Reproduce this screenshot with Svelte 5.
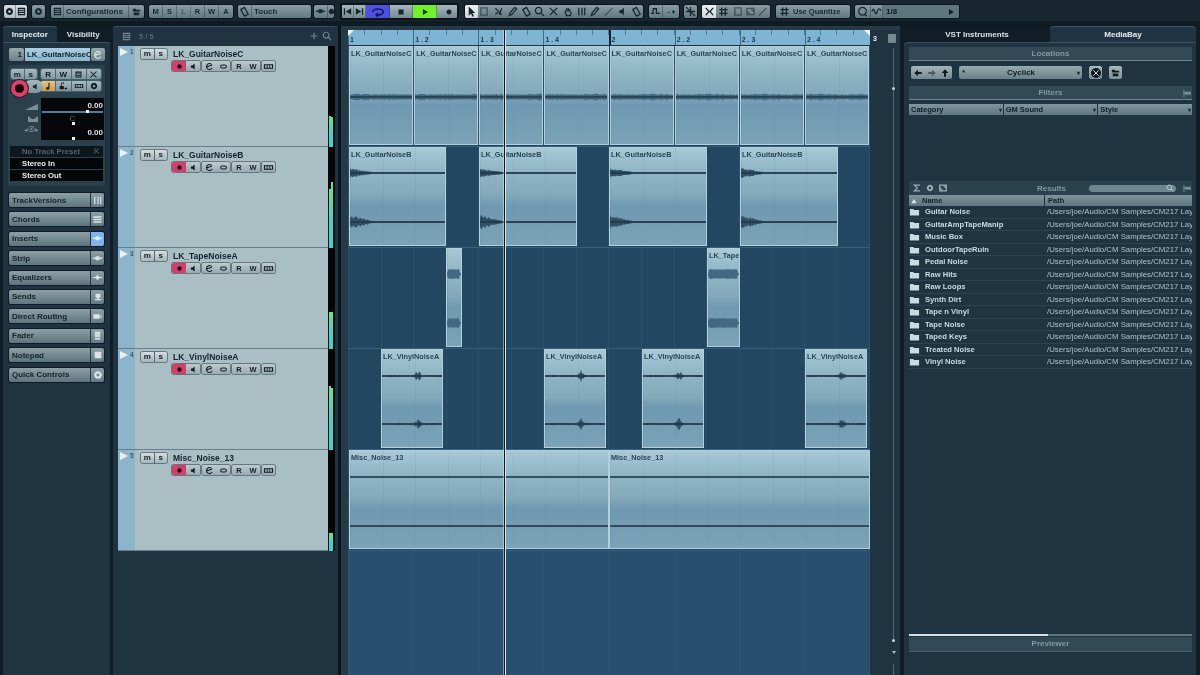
<script>
  const BEAT = 65.125
  const NAMES = ['LK_GuitarNoiseC', 'LK_GuitarNoiseB', 'LK_TapeNoiseA', 'LK_VinylNoiseA', 'Misc_Noise_13']
  const METERS = [[31, 30], [59, 66], [37, 37], [64, 62], [18, 18]]

  const rnd = (i) => { const s = Math.sin(i * 91.17 + 3.3) * 43758.5; return s - Math.floor(s) }

  // amplitude per kind, x in px from start of the event
  const amp = {
    noise: (x, w, s) => 1.8 + rnd(x + s) * 1.6,
    decay: (x, w, s) => 0.7 + (x < 24 ? (24 - x) / 24 * (s % 200 > 90 ? 6 : 4) * (0.5 + rnd(x + s) * 0.7) : 0),
    block: (x, w, s) => (x < 1 || x > w - 2 ? 1 : 4.2 + rnd(x + s) * 0.8),
    burst: (x, w, s) => {
      const d = Math.abs(x - w * 0.6)
      return 0.4 + (d < 5 ? (5 - d) * 1.1 * (0.2 + rnd(x + s)) : rnd(x + s) * 0.8)
    },
    line: () => 0.5
  }

  function wave(kind, w, c, seed) {
    let top = '', bot = ''
    for (let x = 0; x <= w; x++) {
      const a = amp[kind](x, w, seed).toFixed(1)
      top += `${x ? 'L' : 'M'}${x} ${(c - a).toFixed(1)}`
      bot = `L${x} ${(c + +a).toFixed(1)}` + bot
    }
    return top + bot + 'Z'
  }

  const ev = (x0, x1, kind, cs, label = true) => ({ x: x0, w: x1 - x0, kind, cs, label })
  const lanes = [
    { name: NAMES[0], events: [0, 1, 2, 3, 4, 5, 6, 7].map((i) => ev(349 + i * BEAT, 349 + (i + 1) * BEAT - 1, 'noise', [50])) },
    { name: NAMES[1], events: [[349, 446], [479, 577], [609, 707], [740, 838]].map(([a, b]) => ev(a, b, 'decay', [25, 74])) },
    { name: NAMES[2], events: [ev(446, 462, 'block', [25, 74], false), ev(707, 740, 'block', [25, 74])], short: 'LK_Tape' },
    { name: NAMES[3], events: [[381, 443], [544, 606], [642, 704], [805, 867]].map(([a, b]) => ev(a, b, 'burst', [26, 74])) },
    { name: NAMES[4], events: [ev(349, 609, 'line', [26, 75]), ev(609, 870, 'line', [26, 75])] }
  ]

  const rulerLabels = ['1', '1 . 2', '1 . 3', '1 . 4', '2', '2 . 2', '2 . 3', '2 . 4']

  const inspectorBtns = [
    ['TrackVersions', 'versions'], ['Chords', 'bars'], ['Inserts', 'insert', true], ['Strip', 'insert'],
    ['Equalizers', 'eq'], ['Sends', 'send'], ['Direct Routing', 'route'], ['Fader', 'fader'],
    ['Notepad', 'note'], ['Quick Controls', 'knob']
  ]

  const folders = ['Guitar Noise', 'GuitarAmpTapeManip', 'Music Box', 'OutdoorTapeRuin', 'Pedal Noise', 'Raw Hits', 'Raw Loops',
    'Synth Dirt', 'Tape n Vinyl', 'Tape Noise', 'Taped Keys', 'Treated Noise', 'Vinyl Noise']

  const paths = {
    rec: 'M6 3a3 3 0 1 0 .01 0z',
    spk: 'M2.5 4.5h2l3-2.5v8l-3-2.5h-2z',
    play: 'M3.5 2.5l6 3.5-6 3.5z',
    stop: 'M3 3h6v6H3z',
    first: 'M2 2.5h1.4v7H2zM10 2.5v7L4 6z',
    last: 'M10 2.5H8.6v7H10zM2 2.5v7L8 6z',
    cur: 'M3 .5v10l2.4-2.2 1.6 3.4 1.6-.7-1.6-3.3H10z',
    up: 'M6 1.5L10 6H7.2v4.5H4.8V6H2z',
    left: 'M1.5 6L6 2v2.8h4.5v2.4H6V10z',
    right: 'M10.5 6L6 2v2.8H1.5v2.4H6V10z',
    tri: 'M2 9.5L6 3l4 6.5z',
    note: 'M6.5 2h1.3v6.8a2 1.6 0 1 1-1.3-1.4z',
    lock: 'M2 6h5v4H2zM3.5 6V3.5a2 2 0 0 1 4 0H6.4a1 1 0 0 0-2 0V6zM8 8h3v2H8z',
    folder: 'M1 3.2h3.6l1 1.2H11v6H1z',
    fold2: 'M2 3h3l1 1h4v2H2zM3 7h6v3H3z',
    ins: 'M1 5h3V3.5h4V5h3v1.5H8V8H4V6.5H1z',
    bars: 'M1.5 2.5h9v1.6h-9zM1.5 5.2h9v1.6h-9zM1.5 8h9v1.6h-9z',
    eqd: 'M1 5.5h2.8L6 3l2.2 2.5H11v1H8.2L6 9 3.8 6.5H1z',
    send: 'M3 2h6v5H7v1.5h3V10H2V8.5h3V7H3z',
    route: 'M1.5 3.5h7v5h-7zM9.2 5h1.5v2H9.2z',
    fdr: 'M3 1.5h6v6H3zM3 8.5h6v2H3z',
    notes: 'M2 2h8v8H2z',
    gear: 'M6 2.2a3.8 3.8 0 1 0 .01 0zM6 4.5a1.5 1.5 0 1 1-.01 0z',
    mon: 'M1 3.5h10v5H1zM2.2 4.6v2.8h1.9V4.6zM5 4.6v2.8h2V4.6zM7.9 4.6v2.8h1.9V4.6z',
    list: 'M2 2h8v8H2zM3 3.6h6v1H3zM3 5.6h6v1H3zM3 7.6h6v1H3z'
  }
  const lines = {
    cycle: 'M1.5 6a4.5 2.6 0 0 1 9 0 4.5 2.6 0 0 1-6 2.4M6 7l-1.6 1.4L6 10',
    mag: 'M5 1.5a3.5 3.5 0 1 0 .01 0M7.6 7.6L11 11',
    plus: 'M6 2v8M2 6h8',
    edit: 'M9.2 3.6A4 4 0 1 0 9.5 8M2.6 6.2L9 4.4',
    link: 'M4.2 4a2 2 0 0 0 0 4h3.6a2 2 0 0 0 0-4z',
    pencil: 'M2.5 10.5l1-3 5-6 2 1.6-5 6z',
    line: 'M2 10.5L10.5 2',
    x: 'M2 2l8 8M10 2l-8 8',
    sel: 'M2 2h7v8H2z',
    bar3: 'M3 2v8M6.5 2v8M9.5 2v8',
    hand: 'M3.5 7V5M5 6V2.5M6.8 6V2.2M8.5 6.5V3.2M3.5 7L5 10.5h4l1-4',
    glue: 'M2 4l4-2.5 4 7.5-4 2z',
    splice: 'M2.5 2.5l7 7M9.5 2.5l-2.5 7M2.5 9l3-2',
    snap: 'M1 8h2.5V3H7v5h4',
    xtra: 'M2 2l3.5 4L2 10M10 2L6.5 6 10 10',
    grid: 'M4 1.5v9M8 1.5v9M1.5 4h9M1.5 8h9',
    q: 'M6 1.5a4.2 4.2 0 1 0 .01 0M8 8.5l2.5 2.5',
    sq: 'M1 6q1.5-5 3 0t3 0 4-1',
    diag: 'M1 1l10 10M6 1v10M1 6h10',
    rew: 'M3 2v8M9 2.5L4.5 6 9 9.5',
    sum: 'M9.5 2.5H2.8L6.4 6 2.8 9.5h6.7',
    sync: 'M2 7V2.5h8V6M10 5v4.5H2V7M7 3.5l3 3M5 8.5L2 5.5'
  }

  const mainTop = [
    { m: 4, w: 23, light: true, cells: [['gear'], ['list']] },
    { m: 5, w: 13, cells: [['gear']] },
    { m: 6, w: 93, cells: [['list', '', 13], ['', 'Configurations', 65, false, true], ['fold2', '', 15]] },
    { m: 5, w: 84, cells: ['M', 'S', 'L', 'R', 'W', 'A'].map((t) => ['', t, 14, t === 'L']) },
    { m: 5, w: 73, cells: [['glue', '', 14], ['', 'Touch', 59, false, true]] },
    { m: 3, w: 20, cells: [['ins', '', 14], ['rec', '', 6]] }
  ]
  const tools = ['cur', 'sel', 'splice', 'pencil', 'glue', 'mag', 'x', 'hand', 'bar3', 'pencil', 'line', 'spk', 'glue']
</script>

{#snippet ic(name, size = 11)}
  <svg class="ic" width={size} height={size} viewBox="0 0 12 12">
    {#if paths[name]}
      <path d={paths[name]} fill="currentColor" fill-rule="evenodd" />
    {:else}
      <path d={lines[name]} fill="none" stroke="currentColor" stroke-width="1.4" />
    {/if}
  </svg>
{/snippet}

{#snippet cell(icon, text, w)}
  <span class="cell" style="width:{w}px">
    {#if icon}{@render ic(icon)}{/if}
    {#if text}{text}{/if}
  </span>
{/snippet}

<div class="app">
  <header class="toolbar">
    {#each mainTop as g}
      <div class="tgroup" class:light={g.light} style="width:{g.w}px;margin-left:{g.m}px">
        {#each g.cells as c}
          <span class="cell" class:dim={c[3]} class:txt={c[4]} style={c[2] ? `width:${c[2]}px` : 'flex:1'}>
            {#if c[0]}{@render ic(c[0])}{/if}
            {#if c[1]}{c[1]}{/if}
          </span>
        {/each}
      </div>
    {/each}

    <div class="transport">
      {@render cell('first', '', 12)}
      {@render cell('last', '', 12)}
      <span class="cell cyc">{@render ic('cycle', 14)}</span>
      <span class="cell big">{@render ic('stop', 10)}</span>
      <span class="cell go">{@render ic('play', 10)}</span>
      <span class="cell big">{@render ic('rec', 10)}</span>
    </div>

    <div class="tgroup tools">
      {#each tools as t, i}
        <span class="cell" class:white={i === 0} class:faint={i === 1 || i === 10}>{@render ic(t)}</span>
      {/each}
    </div>

    <div class="tgroup w30">
      {@render cell('snap', '', 14)}
      <span class="cell">– ▾</span>
    </div>
    <div class="tgroup w13">{@render cell('diag', '', 13)}</div>
    <div class="tgroup w68">
      <span class="cell white wide14">{@render ic('xtra')}</span>
      <span class="cell wide14">{@render ic('grid')}</span>
      <span class="cell faint">{@render ic('sel')}{@render ic('sync')}{@render ic('line')}</span>
    </div>
    <div class="tgroup w74">
      <span class="cell">{@render ic('grid')}<b class="uq">Use Quantize</b></span>
    </div>
    <div class="tgroup w104">
      {@render cell('q', '', 16)}
      {@render cell('sq', '', 12)}
      <span class="cell q18"><b>1/8</b><i class="qplay">{@render ic('play', 10)}</i></span>
    </div>
  </header>

  <div class="main">
    <aside class="inspector">
      <div class="tabs">
        <div class="tab on">Inspector</div>
        <div class="tab">Visibility</div>
      </div>
      <div class="ipanel">
        <div class="iname">
          <span class="ibtn num">1</span>
          <span class="nm">LK_GuitarNoiseCK</span>
          <span class="ibtn edit">{@render ic('edit', 10)}</span>
        </div>
        <div class="isection">
          <div class="irow">
            <div class="mbtns"><span>m</span><span>s</span></div>
            <div class="mbtns four"><span>R</span><span>W</span><span>{@render ic('list', 9)}</span><span>{@render ic('x', 9)}</span></div>
          </div>
          <div class="irow two">
            <span class="ispk">{@render ic('spk', 9)}</span>
            <span class="bigrec"><i></i></span>
            <div class="mbtns four">
              <span class="amber">{@render ic('note', 10)}</span><span>{@render ic('lock', 10)}</span><span>{@render ic('mon', 10)}</span><span>{@render ic('gear', 10)}</span>
            </div>
          </div>
          <div class="faderbox">
            <div class="flabels">
              <svg width="14" height="8" viewBox="0 0 14 8"><path d="M0 7L13 1v6z" fill="#7b8f97" /></svg>
              <svg width="12" height="8" viewBox="0 0 12 8"><path d="M1 1l4 3h2l4-3v6H1z" fill="#7b8f97" /></svg>
              <span class="pan">◂⦿▸</span>
            </div>
            <div class="fblack">
              <div class="fval">0.00</div>
              <div class="fline"><u class="a"></u></div>
              <div class="fc">C</div>
              <div class="fline none"><u class="b"></u></div>
              <div class="fval">0.00</div>
              <div class="fline none"><u class="b"></u></div>
            </div>
          </div>
          <div class="presets">
            <div class="prow dim"><span>No Track Preset</span><em>{@render ic('rew', 8)}</em></div>
            <div class="prow">Stereo In</div>
            <div class="prow">Stereo Out</div>
          </div>
        </div>
        <div class="ibuttons">
          {#each inspectorBtns as [label, kind, active]}
            <div class="ib">
              <span class="ibl">{label}</span>
              <span class="ibi" class:active>
                {#if kind === 'versions'}{@render ic('bar3', 11)}
                {:else if kind === 'bars'}{@render ic('bars', 11)}
                {:else if kind === 'insert'}{@render ic('ins', 11)}
                {:else if kind === 'eq'}{@render ic('eqd', 11)}
                {:else if kind === 'send'}{@render ic('send', 10)}
                {:else if kind === 'route'}{@render ic('route', 11)}
                {:else if kind === 'fader'}<span class="fg">{@render ic('fdr', 11)}</span>
                {:else if kind === 'note'}{@render ic('notes', 10)}
                {:else}{@render ic('gear', 12)}{/if}
              </span>
            </div>
          {/each}
        </div>
      </div>
    </aside>

    <section class="project">
      <div class="tracklist">
        <div class="tlhead">
          <span class="tlicon">{@render ic('list', 11)}</span>
          <span class="count">5 / 5</span>
          <span class="spacer"></span>
          <span class="tlicon">{@render ic('plus', 10)}</span>
          <span class="tlicon">{@render ic('mag', 10)}</span>
        </div>
        {#each lanes as l, i}
          <div class="track">
            <div class="strip"><svg width="8" height="8" viewBox="0 0 8 8"><path d="M0 0l8 4-8 4z" fill="#e8f1f4" /></svg><span>{i + 1}</span></div>
            <div class="tmain">
              <div class="tline">
                <div class="mbtns tms"><span>m</span><span>s</span></div>
                <div class="tname">{l.name}</div>
              </div>
              <div class="tctl">
                <div class="seg"><span class="rec">{@render ic('rec', 9)}</span><span>{@render ic('spk', 9)}</span></div>
                <div class="seg"><span>{@render ic('edit', 9)}</span><span>{@render ic('link', 9)}</span></div>
                <div class="seg"><span>R</span><span>W</span></div>
                <div class="seg one"><span>{@render ic('mon', 11)}</span></div>
              </div>
            </div>
            <div class="meter">
              <div class="mbar" style="height:{METERS[i][0]}px"></div>
              <div class="mbar" style="height:{METERS[i][1]}px"></div>
            </div>
          </div>
        {/each}
      </div>

      <div class="divider"></div>

      <div class="arrange">
        <div class="ruler">
          {#each rulerLabels as r, i}
            <div class="rcell" class:bar={i === 4}><span>{r}</span></div>
          {/each}
          <i class="loc l"></i>
          <i class="loc r"></i>
        </div>
        <div class="lanes">
          {#each lanes as l, li}
            <div class="lane">
              {#each l.events as e, ei}
                <div class="event" style="left:{e.x - 348}px;width:{e.w}px">
                  {#if e.label}<div class="elabel">{e.w < 40 ? l.short : l.name}</div>{/if}
                  <svg class="ewave" width={e.w} height="99" viewBox="0 0 {e.w} 99">
                    {#each e.cs as c, ci}
                      <path d={wave(e.kind, e.w - 2, c, li * 40 + ei * 9 + ci * 100)} fill={e.kind === 'noise' || e.kind === 'block' ? '#43687f' : '#2f4f63'} />
                      {#if e.kind !== 'block'}<rect x="0" y={c - 0.6} width={e.w - 2} height="1.2" fill="#1c3142" />{/if}
                    {/each}
                  </svg>
                </div>
              {/each}
            </div>
          {/each}
          <div class="rest"></div>
        </div>
        <div class="playhead"></div>
        <div class="vstrip">
          <div class="vtop"><b>3</b><span class="vmenu"></span></div>
          <div class="vslider"><i class="d1"></i><i class="d2"></i><b class="arrow"></b><b class="tail"></b></div>
        </div>
      </div>
    </section>

    <aside class="rack">
      <div class="tabs">
        <div class="tab wide">VST Instruments</div>
        <div class="tab wide on">MediaBay</div>
      </div>
      <div class="rpanel">
        <div class="rhead">Locations</div>
        <div class="locrow">
          <div class="navs"><span>{@render ic('left', 10)}</span><span class="dimmer">{@render ic('right', 10)}</span><span>{@render ic('up', 10)}</span></div>
          <div class="locsel"><b>*</b><span>Cyclick</span><em>▾</em></div>
          <span class="round">{@render ic('x', 8)}</span>
          <span class="squareb">{@render ic('fold2', 11)}</span>
        </div>
        <div class="rhead filt">Filters<span class="rew">|◂◂</span></div>
        <div class="cols">
          <div>Category<em>▾</em></div>
          <div>GM Sound<em>▾</em></div>
          <div>Style<em>▾</em></div>
        </div>
        <div class="spacer"></div>
        <div class="resbar">
          <span class="ricons">{@render ic('sum', 10)}{@render ic('gear', 10)}{@render ic('sync', 10)}</span>
          <span class="rtitle">Results</span>
          <span class="rsearch">{@render ic('mag', 8)}</span>
          <span class="rew">|◂◂</span>
        </div>
        <div class="thead">
          <div class="tname1">{@render ic('tri', 8)}<span>Name</span></div>
          <div class="tpath">Path</div>
        </div>
        {#each folders as f}
          <div class="frow">
            <span class="ficon">{@render ic('folder', 11)}</span>
            <span class="fname">{f}</span>
            <span class="fpath">/Users/joe/Audio/CM Samples/CM217 Layers</span>
          </div>
        {/each}
        <div class="spacer big"></div>
        <div class="progress"><i></i></div>
        <div class="previewer">Previewer</div>
      </div>
    </aside>
  </div>
</div>

<style>
  :global(body) { margin: 0; background: #101d26; }
  .app {
    width: 1200px; height: 675px; overflow: hidden; display: flex; flex-direction: column;
    background: #101d26; color: #16242c;
    font-family: "Liberation Sans", Arial, sans-serif; font-size: 8px; font-weight: 700;
    filter: blur(0.4px);
  }
  .ic { display: block; flex: none; }

  /* toolbar */
  .toolbar { height: 26px; flex: none; display: flex; align-items: flex-start; padding-top: 5px; box-sizing: border-box; background: linear-gradient(#18272f 0 21px, #0f1b23 21px); }
  .tgroup {
    height: 13px; display: flex; flex: none; border-radius: 2px; overflow: hidden; color: #172630; font-size: 7.5px;
    background: linear-gradient(#899ca2, #617980); box-shadow: 0 0 0 1px #0b151b;
  }
  .tgroup.light { background: linear-gradient(#d5dee0, #aebcc0); color: #0d1a22; }
  .cell { display: flex; align-items: center; justify-content: center; gap: 1px; height: 100%; flex: none; box-sizing: border-box; border-right: 1px solid rgba(20, 35, 44, .35); }
  .cell:last-child { border-right: 0; }
  .cell.dim { opacity: .55; }
  .cell.txt { justify-content: flex-start; padding-left: 2px; font-size: 8px; }
  .transport {
    margin-left: 6px; width: 119px; height: 17px; margin-top: -2px; flex: none; display: flex; box-sizing: border-box; border: 2px solid #0a141a; border-radius: 3px;
    background: linear-gradient(#a6b8bc, #76898f); overflow: hidden;
  }
  .transport .big { width: 23px; }
  .cell.cyc { width: 24px; background: #4f4fe0; color: #0d1560; }
  .cell.go { width: 24px; background: #6ff22a; color: #123c08; }
  .tools { margin-left: 6px; width: 178px; }
  .tools .cell { flex: 1; border-right: 0; }
  .white { background: linear-gradient(#eef2f3, #cdd6d8); flex: none !important; width: 13px; }
  .faint { opacity: .55; }
  .w30 { margin-left: 6px; width: 30px; }
  .w30 .cell:last-child { flex: 1; font-size: 6px; }
  .w13 { margin-left: 5px; width: 13px; }
  .w68 { margin-left: 5px; width: 68px; background: linear-gradient(#8a9ca2, #65797f); }
  .wide14 { width: 14px; border-right: 0; }
  .w68 .faint { flex: 1; border: 0; }
  .w74 { margin-left: 6px; width: 74px; }
  .w74 .cell { flex: 1; justify-content: flex-start; padding-left: 3px; gap: 3px; border: 0; }
  .uq { font-size: 7.5px; white-space: nowrap; }
  .w104 { margin-left: 5px; width: 104px; }
  .q18 { flex: 1; justify-content: space-between; padding: 0 3px; background: #5f757c; }
  .q18 b { color: #0f1d25; font-size: 8px; }
  .qplay { color: #0f1d25; }

  /* main row */
  .main { flex: 1; min-height: 0; display: flex; }
  .tabs { height: 16px; display: flex; flex: none; }
  .tab { flex: 1; display: flex; align-items: center; justify-content: center; color: #d8e2e5; font-size: 8px; border-radius: 4px 4px 0 0; }
  .tab.on { background: #1f3440; color: #e6eef0; box-shadow: inset 0 1px 0 #3c5561; }

  /* inspector */
  .inspector { width: 107px; margin-left: 3px; flex: none; display: flex; flex-direction: column; }
  .ipanel { flex: 1; background: #1f3440; border-radius: 0 3px 0 0; box-shadow: inset 0 1px 0 #3c5561; padding: 6px 5px 0 6px; display: flex; flex-direction: column; }
  .iname { height: 13px; display: flex; gap: 1px; }
  .ibtn { display: flex; align-items: center; justify-content: center; background: linear-gradient(#96a8ad, #6c8188); border-radius: 2px; color: #142028; }
  .num { width: 15px; justify-content: flex-end; padding-right: 2px; box-sizing: border-box; }
  .edit { width: 14px; color: #dfe7e9; }
  .nm { width: 65px; overflow: hidden; white-space: nowrap; background: linear-gradient(#a9cfe2, #8cb6cc); color: #10212b; line-height: 13px; font-size: 7.8px; padding-left: 2px; box-sizing: border-box; }
  .isection { margin-top: 4px; margin-left: -1px; padding: 4px 1px 5px 3px; height: 121px; background: #2a404b; box-sizing: border-box; border-radius: 3px; display: flex; flex-direction: column; }
  .irow { display: flex; gap: 4px; height: 10px; }
  .irow.two { margin-top: 1px; height: 12px; align-items: center; position: relative; padding-left: 30px; }
  .mbtns { display: flex; width: 26px; height: 10px; flex: none; color: #101c24; font-size: 8px; border-radius: 2px; overflow: hidden; box-shadow: 0 0 0 1px #44606c; background: linear-gradient(#a8babe, #7f959c); }
  .mbtns span { flex: 1; display: flex; align-items: center; justify-content: center; border-right: 1px solid #51686f; }
  .mbtns span:last-child { border-right: 0; }
  .mbtns.four { width: 60px; }
  .amber { background: linear-gradient(#edc477, #d29a45); }
  .bigrec { position: absolute; left: 0; top: 0; width: 17px; height: 17px; border-radius: 50%; background: #e93a6b; box-sizing: border-box; display: flex; align-items: center; justify-content: center; box-shadow: 0 0 0 1px #17262e; }
  .bigrec i { width: 9px; height: 9px; background: #14060a; border-radius: 50%; }
  .ispk { position: absolute; left: 13px; top: 0; width: 19px; height: 13px; padding-left: 4px; box-sizing: border-box; border-radius: 7px; background: linear-gradient(#a8babe, #7f959c); display: flex; align-items: center; justify-content: center; }
  .faderbox { display: flex; margin-top: 6px; gap: 2px; height: 43px; }
  .flabels { width: 28px; display: flex; flex-direction: column; align-items: flex-end; justify-content: space-around; padding: 4px 0; box-sizing: border-box; color: #7b8f97; font-size: 7px; }
  .pan { font-size: 7px; white-space: nowrap; font-weight: 400; }
  .fblack { width: 63px; background: #050709; position: relative; color: #dbe4e6; font-size: 8px; }
  .fval { text-align: right; height: 11px; line-height: 11px; padding-right: 1px; margin-top: 2px; }
  .fline { height: 2px; position: relative; background: #4d7ea0; margin: 0 1px; }
  .fline.none { background: none; }
  .fline u { position: absolute; width: 3px; height: 3px; top: -1px; background: #eef3f4; }
  .fline .a { right: 14px; }
  .fline .b { left: 30px; }
  .fc { text-align: center; height: 8px; line-height: 8px; margin-top: 2px; color: #55666d; font-weight: 400; }
  .presets { margin-top: 6px; margin-left: -1px; display: flex; flex-direction: column; gap: 1px; }
  .prow { height: 11px; line-height: 11px; background: #04070a; color: #e8eef0; padding-left: 12px; font-size: 7.7px; display: flex; justify-content: space-between; width: 93px; box-sizing: border-box; }
  .prow.dim { color: #52636a; background: #0e171c; }
  .prow em { padding: 1px 2px 0 0; }
  .ibuttons { margin-top: 7px; display: flex; flex-direction: column; gap: 5.4px; }
  .ib { height: 14px; display: flex; width: 95px; box-shadow: 0 0 0 1px #101c24; border-radius: 2px; overflow: hidden; }
  .ibl { flex: 1; display: flex; align-items: center; padding-left: 3px; background: linear-gradient(#8ca0a6, #5e747c); color: #152229; font-size: 8px; }
  .ibi { width: 13px; margin-left: 1px; display: flex; align-items: center; justify-content: center; background: linear-gradient(#8ca0a6, #647a81); color: #dbe4e6; }
  .ibi.active { background: #7db4ee; color: #d8ecff; }
  .fg { color: #cfdcdf; }

  /* project */
  .project { width: 787px; margin-left: 3px; flex: none; display: flex; background: #1f3440; border-radius: 4px 4px 0 0; box-shadow: inset 0 1px 0 #3a5361; }
  .tracklist { width: 222px; flex: none; padding-left: 5px; box-sizing: border-box; display: flex; flex-direction: column; }
  .tlhead { height: 20px; flex: none; display: flex; align-items: center; color: #64808c; gap: 3px; padding: 0 3px 0 3px; box-sizing: border-box; font-size: 7.5px; }
  .count { margin-left: 4px; font-weight: 400; }
  .spacer { flex: 1; }
  .tlicon { color: #6c8692; }
  .track { height: 101px; flex: none; display: flex; box-sizing: border-box; border-bottom: 1px solid #66808a; background: #a9bfc3; }
  .strip { width: 17px; background: #8cb5cc; flex: none; display: flex; align-items: flex-start; gap: 2px; padding: 2px 0 0 2px; box-sizing: border-box; color: #3d5a6b; font-size: 6.5px; }
  .tmain { flex: 1; padding: 2px 0 0 6px; }
  .tline { display: flex; align-items: center; gap: 6px; height: 11px; }
  .tms { box-shadow: 0 0 0 1px #64787f; background: linear-gradient(#d4dde0, #a7b7bb); }
  .tname { color: #12222e; font-size: 8.5px; white-space: nowrap; }
  .tctl { display: flex; margin: 1px 0 0 31px; gap: 2px; height: 11px; }
  .seg { width: 28px; height: 10px; margin-top: 1px; display: flex; flex: none; color: #101c24; border-radius: 2px; overflow: hidden; box-shadow: 0 0 0 1px #64787f; background: linear-gradient(#bdcbce, #98abb0); font-size: 7.5px; }
  .seg span { flex: 1; display: flex; align-items: center; justify-content: center; }
  .seg .rec { background: #d83c68; }
  .seg.one { width: 13px; }
  .meter { width: 7px; background: #040607; flex: none; display: flex; align-items: flex-end; padding-left: 1px; box-sizing: border-box; margin-bottom: -1px; }
  .mbar { width: 2px; background: linear-gradient(#6fe08c, #38d6cc 55%); }
  .divider { width: 6px; flex: none; background: linear-gradient(to right, #1f3440 0 3px, #0a141a 3px 6px); }

  /* arrange */
  .arrange { flex: 1; position: relative; padding-left: 7px; padding-right: 30px; padding-top: 4px; display: flex; flex-direction: column; background: #243a47; }
  .ruler {
    height: 16px; flex: none; display: flex; position: relative; width: 522px; border-bottom: 1px solid #1f3440; box-sizing: border-box;
    background: repeating-linear-gradient(to right, rgba(50, 85, 110, .6) 0 1px, transparent 1px 16.28px) 0 0 / 100% 5px no-repeat, #7fb5d4;
  }
  .rcell { flex: 1; border-left: 1px solid #3f6b86; box-sizing: border-box; color: #1c3446; font-size: 7px; padding: 6px 0 0 1px; }
  .rcell.bar { border-left: 2px solid #12222d; }
  .loc { position: absolute; top: 0; width: 0; height: 0; border-top: 6px solid #f2f7f9; }
  .loc.l { left: 0; border-right: 6px solid transparent; }
  .loc.r { right: 0; border-left: 6px solid transparent; }
  .lanes { flex: 1; display: flex; flex-direction: column; background: #27506e; width: 522px; }
  .lane {
    height: 101px; flex: none; position: relative; box-sizing: border-box; border-bottom: 1px solid #35607c;
    background: repeating-linear-gradient(to right, rgba(110, 155, 185, .12) 0 1px, transparent 1px 32.56px), #234661;
  }
  .rest { flex: 1; background: repeating-linear-gradient(to right, rgba(110, 155, 185, .08) 0 1px, transparent 1px 65.12px), #28506e; }
  .event {
    position: absolute; top: 0; height: 99px; box-sizing: border-box; border: 1px solid #b4d0da; overflow: hidden;
    background: repeating-linear-gradient(to right, rgba(70, 110, 135, .1) 0 1px, transparent 1px 32.56px), linear-gradient(#a8c9d5, #90b5c5 24%, #84a9bb 48%, #6f99b0 60%, #7ca3b7);
  }
  .elabel { position: absolute; left: 1px; top: 2px; color: #2a4656; font-size: 7.3px; white-space: nowrap; }
  .ewave { position: absolute; left: 0; top: 0; }
  .playhead { position: absolute; left: 163px; top: 4px; bottom: 0; width: 1px; background: #0c171e; box-shadow: 1px 0 0 #dbe6ea, -1px 0 0 rgba(219, 230, 234, .5); }
  .vstrip { position: absolute; right: 0; top: 4px; bottom: 0; width: 30px; display: flex; flex-direction: column; background: #1f3440; }
  .vtop { height: 16px; flex: none; display: flex; align-items: center; color: #e8eef0; font-size: 7px; padding: 0 4px 0 3px; justify-content: space-between; box-sizing: border-box; }
  .vmenu { width: 8px; height: 9px; background: #76898f; border-radius: 1px; }
  .vslider { flex: 1; position: relative; }
  .vslider::before { content: ''; position: absolute; right: 6px; top: 2px; bottom: 34px; width: 1px; background: #4d6773; }
  .vslider i { position: absolute; right: 5px; width: 3px; height: 3px; background: #cbd6da; border-radius: 50%; }
  .d1 { top: 41px; }
  .d2 { bottom: 33px; }
  .arrow { position: absolute; right: 4px; bottom: 21px; border-top: 3px solid #a9babf; border-left: 2.5px solid transparent; border-right: 2.5px solid transparent; }
  .tail { position: absolute; right: 6px; bottom: 0; height: 11px; width: 1px; background: #4d6773; }

  /* mediabay */
  .rack { width: 292px; margin-left: 4px; flex: none; display: flex; flex-direction: column; }
  .tab.wide { height: 16px; }
  .rpanel { flex: 1; background: #1f3340; box-shadow: inset 0 1px 0 #3a5361; border-radius: 4px 0 0 0; padding: 5px 4px 0 5px; display: flex; flex-direction: column; color: #c8d6da; }
  .rhead { height: 14px; flex: none; position: relative; text-align: center; line-height: 13px; color: #8299a3; background: #334a56; border-bottom: 1px solid #6b838d; box-sizing: border-box; }
  .rew { position: absolute; right: 2px; font-size: 7px; color: #8299a3; letter-spacing: -1px; }
  .locrow { height: 13px; margin-top: 5px; display: flex; gap: 7px; padding-left: 2px; color: #0f1c24; flex: none; }
  .navs { display: flex; width: 41px; flex: none; background: linear-gradient(#a3b5ba, #74898f); border-radius: 2px; }
  .navs span { flex: 1; display: flex; align-items: center; justify-content: center; }
  .dimmer { opacity: .5; }
  .locsel { width: 123px; flex: none; display: flex; align-items: center; background: linear-gradient(#96aab0, #6a8087); border-radius: 2px; padding: 0 2px 0 3px; box-sizing: border-box; }
  .locsel span { flex: 1; text-align: center; }
  .locsel em, .cols em { font-style: normal; font-size: 6px; color: #1a2a33; }
  .round { width: 13px; height: 13px; display: flex; align-items: center; justify-content: center; background: linear-gradient(#a8b9bd, #7d9197); border-radius: 2px; }
  .round :global(svg) { background: #0f1920; color: #dfe7e9; border-radius: 50%; padding: 1px; }
  .squareb { width: 13px; height: 13px; display: flex; align-items: center; justify-content: center; background: linear-gradient(#a8b9bd, #7d9197); border-radius: 2px; }
  .filt { margin-top: 7px; }
  .cols { display: flex; gap: 1px; margin-top: 4px; height: 11px; flex: none; width: 283px; }
  .cols div { flex: 1; display: flex; align-items: center; justify-content: space-between; padding: 0 1px 0 2px; background: linear-gradient(#8095a0, #5f7780); color: #0f1d25; font-size: 7.5px; box-sizing: border-box; }
  .rpanel > .spacer { flex: 0 0 66px; }
  .rpanel > .spacer.big { flex: 1; }
  .resbar { height: 14px; flex: none; display: flex; align-items: center; position: relative; background: #2b424e; color: #8299a3; }
  .ricons { display: flex; gap: 3px; padding-left: 3px; color: #9db0b8; }
  .rtitle { position: absolute; left: 128px; }
  .rsearch { position: absolute; left: 180px; width: 87px; height: 7px; border-radius: 4px; background: #6d8791; display: flex; justify-content: flex-end; padding-right: 2px; box-sizing: border-box; color: #c8d6da; align-items: center; }
  .thead { height: 11px; flex: none; display: flex; gap: 1px; color: #0f1d25; font-size: 7.5px; }
  .thead > div { display: flex; align-items: center; background: linear-gradient(#7e939c, #5f767e); }
  .tname1 { width: 135px; padding-left: 1px; gap: 4px; box-sizing: border-box; }
  .tname1 :global(svg) { color: #dbe4e6; }
  .tpath { flex: 1; padding-left: 3px; }
  .frow { height: 12.5px; flex: none; display: flex; align-items: center; box-sizing: border-box; border-bottom: 1px solid #2c4450; white-space: nowrap; overflow: hidden; }
  .ficon { color: #c9dbe2; width: 16px; flex: none; }
  .fname { width: 122px; flex: none; color: #c6dbe4; font-size: 7.6px; }
  .fpath { color: #aac2cc; font-size: 7.8px; font-weight: 400; }
  .progress { height: 2px; flex: none; background: #61767f; width: 283px; }
  .progress i { display: block; width: 139px; height: 2px; background: #d6dfe1; }
  .previewer { height: 15px; flex: none; width: 283px; margin-top: 1px; margin-bottom: 23px; line-height: 14px; text-align: center; background: #334a56; color: #8299a3; border-bottom: 1px solid #49606b; box-sizing: border-box; }
</style>
